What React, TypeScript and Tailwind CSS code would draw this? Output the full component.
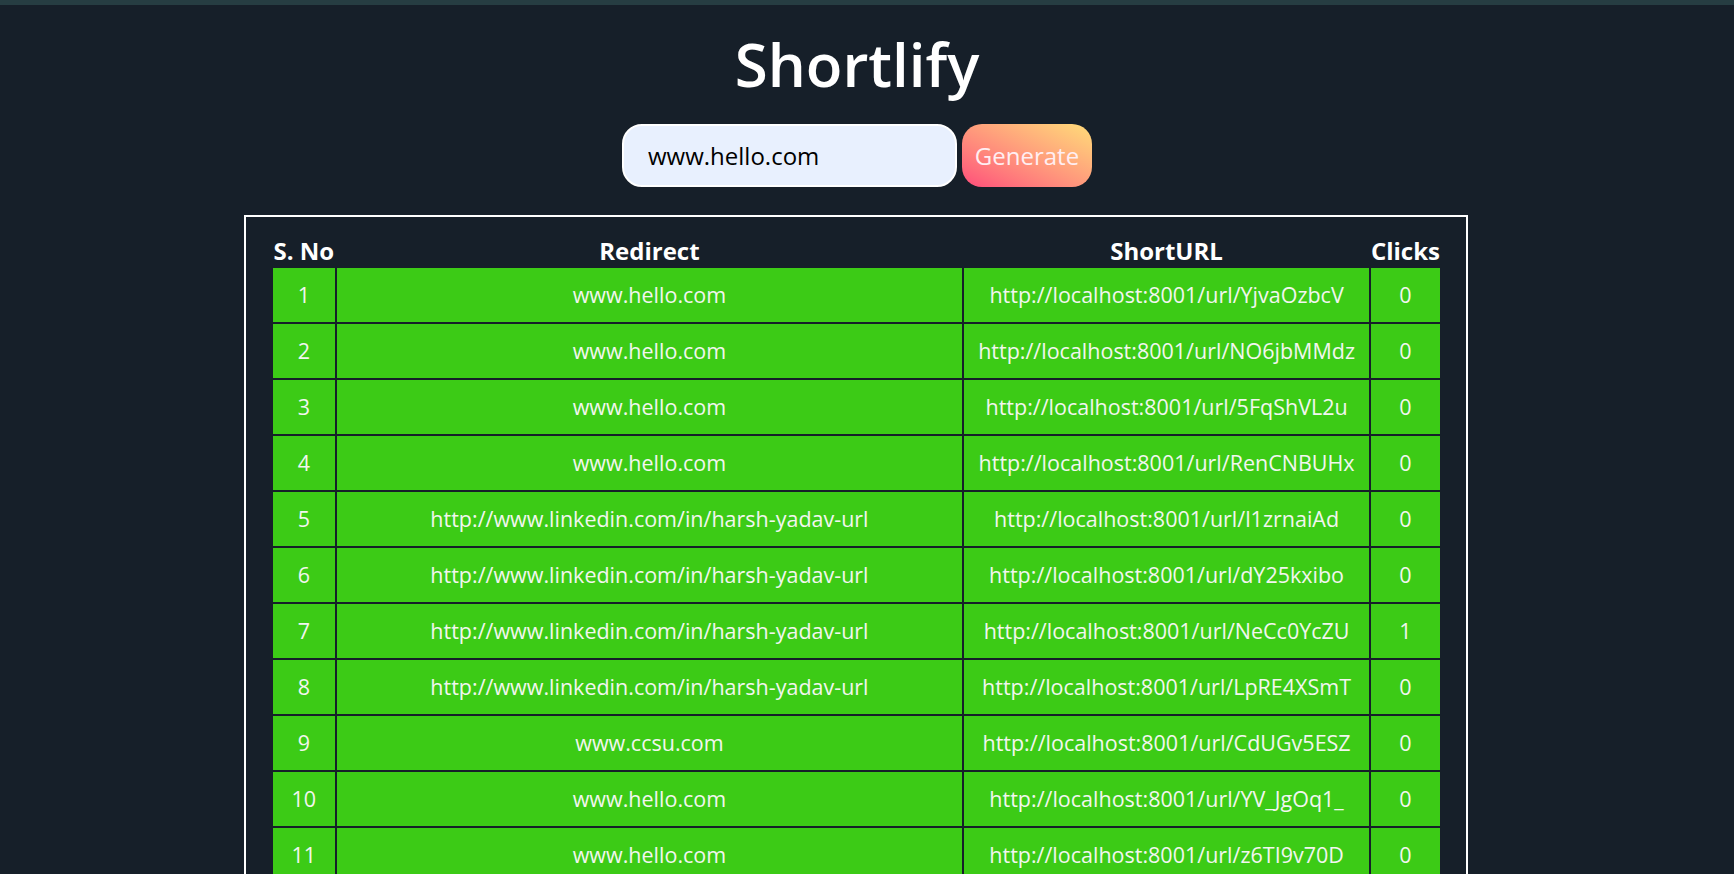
import React from 'react'

const rows = [
  { id: 1, redirect: 'www.hello.com', short: 'YjvaOzbcV', clicks: 0 },
  { id: 2, redirect: 'www.hello.com', short: 'NO6jbMMdz', clicks: 0 },
  { id: 3, redirect: 'www.hello.com', short: '5FqShVL2u', clicks: 0 },
  { id: 4, redirect: 'www.hello.com', short: 'RenCNBUHx', clicks: 0 },
  { id: 5, redirect: 'http://www.linkedin.com/in/harsh-yadav-url', short: 'l1zrnaiAd', clicks: 0 },
  { id: 6, redirect: 'http://www.linkedin.com/in/harsh-yadav-url', short: 'dY25kxibo', clicks: 0 },
  { id: 7, redirect: 'http://www.linkedin.com/in/harsh-yadav-url', short: 'NeCc0YcZU', clicks: 1 },
  { id: 8, redirect: 'http://www.linkedin.com/in/harsh-yadav-url', short: 'LpRE4XSmT', clicks: 0 },
  { id: 9, redirect: 'www.ccsu.com', short: 'CdUGv5ESZ', clicks: 0 },
  { id: 10, redirect: 'www.hello.com', short: 'YV_JgOq1_', clicks: 0 },
  { id: 11, redirect: 'www.hello.com', short: 'z6TI9v70D', clicks: 0 },
]

const App = () => {
  return (
    <div className="h-[874px] bg-[#161f29] text-white font-['Open_Sans',sans-serif] border-t-[5px] border-[#263d42] overflow-hidden">
      <div className="flex flex-col items-center pr-[20px]">
        <h1 className="text-[60px] leading-none font-semibold mt-[29px] h-[79px]">Shortlify</h1>
        <form className="flex gap-[5px] mt-[11px]" onSubmit={(e) => e.preventDefault()}>
          <input
            className="w-[335px] h-[63px] rounded-[20px] border-2 border-white bg-[#e8f0fe] text-black text-[24px] pl-[24px] outline-none"
            defaultValue="www.hello.com"
          />
          <button className="w-[130px] h-[63px] rounded-[20px] bg-linear-to-tr from-[#ff4a7a] to-[#ffdc78] text-[#ffeef2] text-[24px]">
            Generate
          </button>
        </form>
      </div>
      <div className="ml-[244px] w-[1224px] mt-[28px] border-2 border-white pl-[25px] pr-[24px] pt-[17px] pb-[20px]">
        <table className="w-full border-separate border-spacing-[2px]">
          <thead>
            <tr className="text-[24px] leading-[30px] font-bold h-[30px]">
              <th className="w-[62px] px-0">S. No</th>
              <th className="w-[629px]">Redirect</th>
              <th className="w-[405px]">ShortURL</th>
              <th className="px-0">Clicks</th>
            </tr>
          </thead>
          <tbody>
            {rows.map((r) => (
              <tr key={r.id} className="h-[54px] text-[21.5px] text-[#f2f6ef]">
                <td className="bg-[#3ccb16] text-center">{r.id}</td>
                <td className="bg-[#3ccb16] text-center">{r.redirect}</td>
                <td className="bg-[#3ccb16] text-center">http://localhost:8001/url/{r.short}</td>
                <td className="bg-[#3ccb16] text-center">{r.clicks}</td>
              </tr>
            ))}
          </tbody>
        </table>
      </div>
    </div>
  )
}

export default App
